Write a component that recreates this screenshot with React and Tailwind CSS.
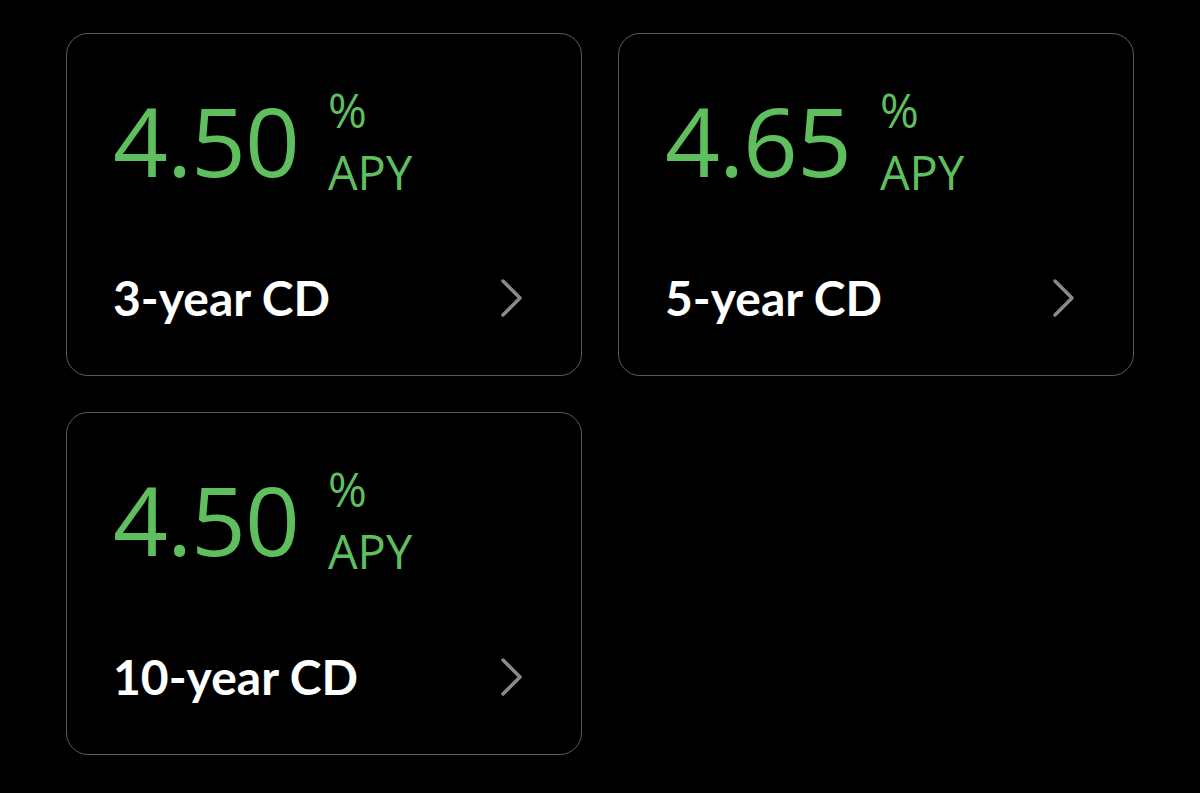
import React from 'react';

const rates = [
    { rate: '4.50', term: '3-year CD' },
    { rate: '4.65', term: '5-year CD' },
    { rate: '4.50', term: '10-year CD' },
];

const Chevron = () => (
    <svg width="26" height="40" viewBox="0 0 26 40" fill="none">
        <path d="M4 3 L21 20 L4 37" stroke="#8a8a8a" strokeWidth="3.5" strokeLinecap="round" strokeLinejoin="round" />
    </svg>
);

const RateCard = ({ rate, term }) => {
    return (
        <div className="h-[343px] rounded-[22px] border border-[#5a5a5a] bg-black flex flex-col justify-between pl-[46px] pr-[56px] pt-[58px] pb-[41px]">
            <div className="flex items-start text-[#5fbf5f]" style={{ fontFamily: '"Open Sans", sans-serif' }}>
                <span className="text-[96px] font-normal leading-none tracking-[-1px]">{rate}</span>
                <div className="ml-[29px] -mt-[5px] flex flex-col gap-[15px] text-[47px] font-normal leading-none">
                    <span>%</span>
                    <span>APY</span>
                </div>
            </div>
            <div className="flex items-center justify-between">
                <span className="text-[48px] font-bold text-white" style={{ fontFamily: 'Lato, sans-serif' }}>{term}</span>
                <Chevron />
            </div>
        </div>
    );
}

const App = () => {
    return (
        <div className="w-[1200px] h-[793px] bg-black pl-[66px] pt-[33px]">
            <div className="grid grid-cols-[516px_516px] gap-[36px]">
                {rates.map((item, i) => (
                    <RateCard key={i} rate={item.rate} term={item.term} />
                ))}
            </div>
        </div>
    );
}

export default App;
